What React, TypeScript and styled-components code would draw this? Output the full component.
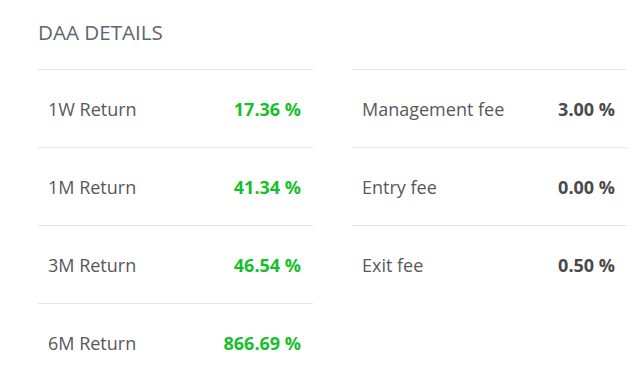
import React from "react";
import styled, { createGlobalStyle } from "styled-components";

const GlobalStyle = createGlobalStyle`
  body {
    margin: 0;
    background: #ffffff;
    font-family: "Open Sans", "Liberation Sans", sans-serif;
  }
`;

const Page = styled.div`
  padding: 18px 12px 0 38px;
`;

const Title = styled.h2`
  margin: 0;
  font-size: 20.6px;
  line-height: 28px;
  font-weight: 400;
  color: #5d6770;
  text-transform: uppercase;
`;

const Columns = styled.div`
  display: grid;
  grid-template-columns: 275px 275px;
  column-gap: 39px;
  margin-top: 23px;
  align-items: start;
`;

const List = styled.div`
  display: flex;
  flex-direction: column;
`;

const Row = styled.div`
  display: flex;
  align-items: center;
  justify-content: space-between;
  height: 76px;
  padding: 1px 12px 0 10px;
  border-top: 1px solid #e6e6e6;
`;

const Label = styled.span`
  font-size: 18px;
  color: #58585a;
`;

const Value = styled.span<{ $positive?: boolean }>`
  font-size: 18px;
  font-weight: 700;
  color: ${p => (p.$positive ? "#17bf2b" : "#4a4a4a")};
`;

interface Item {
  label: string;
  value: string;
}

const returns: Item[] = [
  { label: "1W Return", value: "17.36 %" },
  { label: "1M Return", value: "41.34 %" },
  { label: "3M Return", value: "46.54 %" },
  { label: "6M Return", value: "866.69 %" },
];

const fees: Item[] = [
  { label: "Management fee", value: "3.00 %" },
  { label: "Entry fee", value: "0.00 %" },
  { label: "Exit fee", value: "0.50 %" },
];

const App: React.FunctionComponent = () => {
  return (
    <Page>
      <GlobalStyle />
      <Title>DAA Details</Title>
      <Columns>
        <List>
          {returns.map(r => (
            <Row key={r.label}>
              <Label>{r.label}</Label>
              <Value $positive>{r.value}</Value>
            </Row>
          ))}
        </List>
        <List>
          {fees.map(f => (
            <Row key={f.label}>
              <Label>{f.label}</Label>
              <Value>{f.value}</Value>
            </Row>
          ))}
        </List>
      </Columns>
    </Page>
  );
};

export default App;
